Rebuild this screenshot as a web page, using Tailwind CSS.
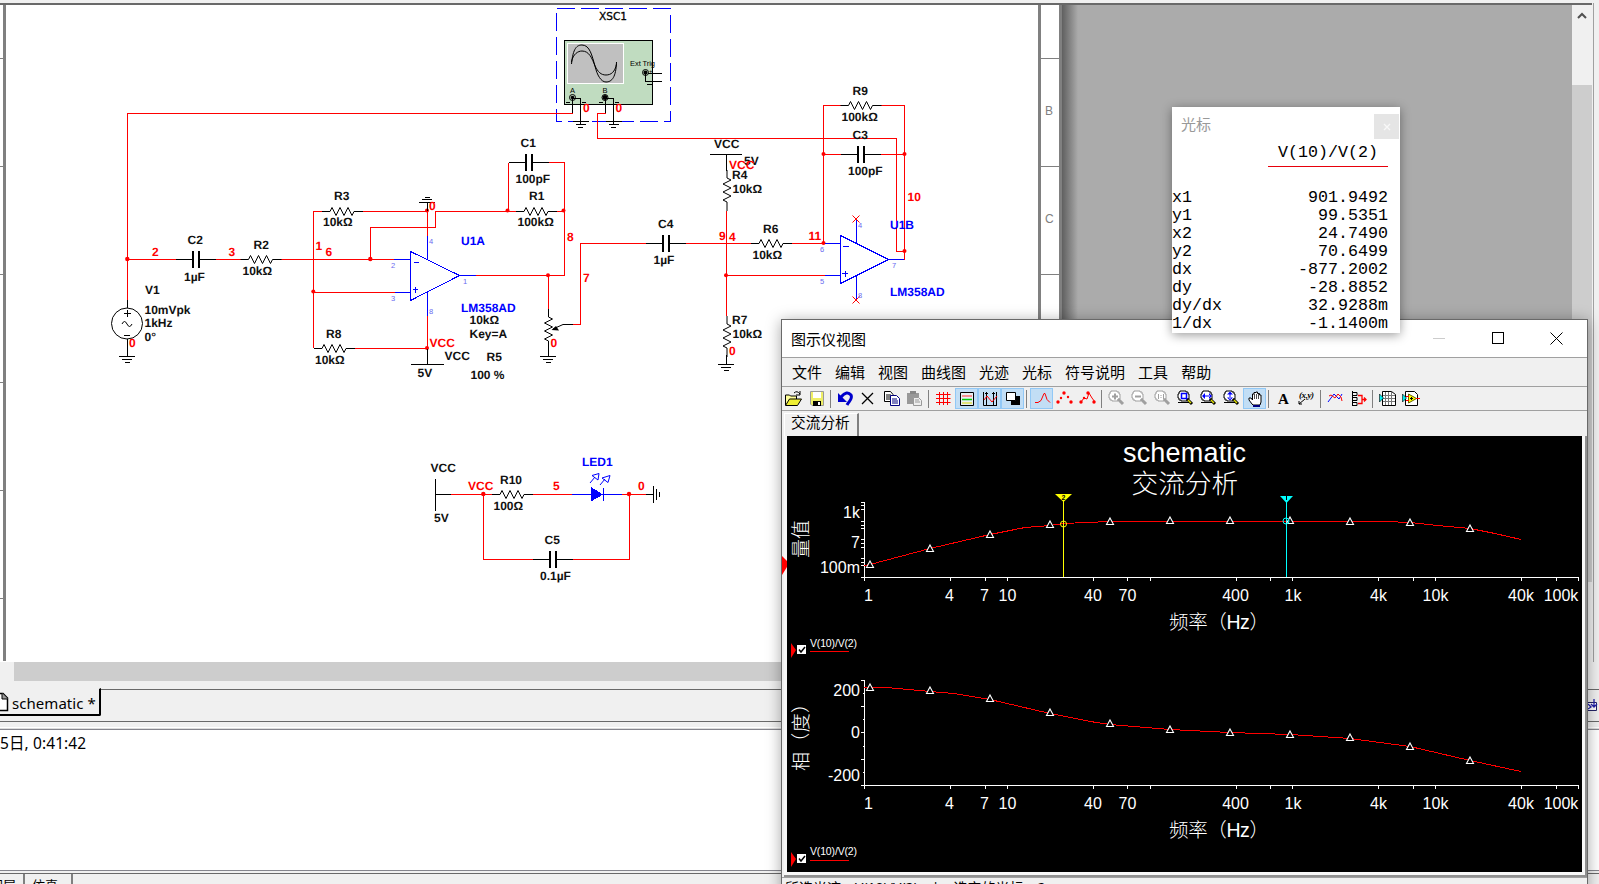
<!DOCTYPE html>
<html lang="zh-CN">
<head>
<meta charset="utf-8">
<title>schematic</title>
<script src="https://cdn.jsdelivr.net/npm/@tailwindcss/browser@4"></script>
</head>
<body class="relative h-[884px] w-[1599px] overflow-hidden bg-[#f0f0f0] font-['Noto_Sans','Noto_Sans_CJK_SC',sans-serif] text-black">

<!-- symbols -->
<svg class="absolute size-0" aria-hidden="true">
  <defs>
    <path id="res" d="M0 0h8l2-4 4 8 4-8 4 8 4-8 4 8 2-4h9" fill="none" stroke="#000"/>
    <g id="cap"><path d="M0 0h16M24 0h16" stroke="#000"/><path d="M17 -8.500v17M23 -8.500v17" stroke="#000" stroke-width="2"/></g>
    <path id="gnd" d="M-8 0h16M-5 3h10M-2.500 6h5" fill="none" stroke="#000"/>
    <path id="tri" d="M0 -3.500L3.500 3H-3.500Z" fill="#000" stroke="#fff" stroke-width="1.100"/>
    <g id="mag"><path d="M3 2h6v1h2v2h1v5h-2v2H4v-1H2V9H1V5h1V3h1z" fill="#fff" stroke="currentColor"/><path d="M10 10l5 5" stroke="currentColor" stroke-width="3"/></g>
  </defs>
</svg>

<div class="flex h-full flex-col">
  <!-- workspace -->
  <main class="flex h-[662px] border-t-[3px] border-[#f0f0f0]">
    <div class="h-[659px] w-[1062px] border-t-2 border-[#696969] bg-white">
      <svg class="block" width="1062" height="657" viewBox="0 5 1062 657" shape-rendering="crispEdges">
        <path d="M4.500 5V661M1039.500 5V661M1060.500 5V661" stroke="#808080" stroke-width="3"/>
        <path d="M0 58.500h3M0 166.500h3M0 274.500h3M0 382.500h3M0 490.500h3M0 598.500h3M1041 58.500h18M1041 166.500h18M1041 274.500h18" stroke="#808080"/>
        <g font-family="Liberation Sans" font-size="12" fill="#808080"><text x="1045" y="114.500">B</text><text x="1045" y="222.500">C</text></g>

        <!-- oscilloscope XSC1 -->
        <rect x="556.500" y="8.500" width="114" height="113" fill="none" stroke="#00f" stroke-dasharray="18 6"/>
        <rect x="564.500" y="40.500" width="88" height="64" fill="#c0dcc0" stroke="#000"/>
        <rect x="567.500" y="43.500" width="56" height="40" fill="#c0c0c0" stroke="#fff"/>
        <g fill="none" stroke="#000" shape-rendering="auto">
          <path d="M571.500 64C573 48 577 45 582 45C590 45 592 56 595 66C597 75 601 82 606 82C612 82 616 77 616.500 62M571.500 62C573 54 578 51 582 51C589 51 592 58 595 66C598 72 601 75 606 75C611 75 615 72 616.500 64"/>
          <circle cx="572.500" cy="97.500" r="3"/><circle cx="605" cy="97.500" r="3"/><circle cx="645.500" cy="72.500" r="3"/>
        </g>
        <g fill="#000" shape-rendering="auto"><circle cx="572.500" cy="97.500" r="1.800"/><circle cx="605" cy="97.500" r="2.400"/><circle cx="645.500" cy="72.500" r="2"/></g>
        <path d="M572.500 97v16M572.500 98.500h8V124M605.500 97v16M605.500 98.500h8V124M645.500 72.500V81.500H662M648 73.500H662M647 84.500h5M566 102h4M599 102h4M582 102.500h4M615 102.500h4" fill="none" stroke="#000"/>
        <use href="#gnd" x="580.500" y="121.500"/><use href="#gnd" x="613.500" y="121.500"/>
        <g font-family="Liberation Sans" font-size="7.500" fill="#000">
          <text x="630" y="66" textLength="25">Ext Trig</text><text x="570" y="93">A</text><text x="602.500" y="93">B</text><text x="649" y="73" font-size="6">+</text>
        </g>
        <text x="599" y="19.500" font-family="DejaVu Sans" font-size="11" fill="#000" stroke="#000" stroke-width=".3" textLength="28" lengthAdjust="spacingAndGlyphs">XSC1</text>

        <!-- red nets -->
        <g fill="none" stroke="#f00">
          <path d="M572.500 113.500H127.500V300M127.500 259.500H176M216 259.500H241M281 259.500H394M313.500 348V211.500H323M363 211.500H427.500V236M313.500 292.500H395M354 348.500H427.500V316"/>
          <path d="M370.500 259.500V227.500H435.500V211.500H516M508.500 211.500V162.500M548 162.500H564.500V275.500H476M556 211.500H564M548.500 275.500V309M573 324.500H580.500V243.500H646M686 243.500H751M792 243.500H825"/>
          <path d="M605.500 113.500H597.500V138.500H896.500V251.500H904.500M726.500 211V316M726.500 275.500H825M823.500 243V105.500H841M880 105.500H904.500V259.500M823.500 154.500H841M880 154.500H904"/>
          <path d="M451 494.500H492M532 494.500H572M622 494.500H646M483.500 494V559.500H533M572 559.500H629.500V494"/>
        </g>
        <g fill="#f00" shape-rendering="auto">
          <circle cx="127.300" cy="259" r="2.200"/><circle cx="370.300" cy="259" r="2.200"/><circle cx="313.300" cy="291.500" r="2"/><circle cx="427" cy="210.500" r="2"/><circle cx="507.500" cy="210.500" r="2"/><circle cx="563.500" cy="210.500" r="2"/><circle cx="548" cy="275.300" r="2"/><circle cx="427" cy="348" r="2"/><circle cx="726" cy="275.300" r="2"/><circle cx="823.500" cy="154" r="2"/><circle cx="904.500" cy="154" r="2"/><circle cx="823.500" cy="243" r="2"/><circle cx="904.500" cy="251" r="2"/><circle cx="483.300" cy="494" r="2.200"/><circle cx="629" cy="494" r="2.200"/>
        </g>
        <path d="M852.500 215.500l7 7M859.500 215.500l-7 7M852.500 296.500l7 7M859.500 296.500l-7 7" stroke="#f00" shape-rendering="auto"/>

        <!-- passive parts -->
        <use href="#cap" x="176" y="259.500"/><use href="#cap" x="508.500" y="162.500"/><use href="#cap" x="646" y="243.500"/><use href="#cap" x="841" y="154.500"/><use href="#cap" x="532.500" y="559.500"/>
        <g shape-rendering="auto">
          <use href="#res" x="240.500" y="259.500"/><use href="#res" x="322" y="211.500"/><use href="#res" x="314" y="348.500"/><use href="#res" x="516" y="211.500"/><use href="#res" x="751" y="243.500"/><use href="#res" x="840.500" y="105.500"/><use href="#res" x="492" y="494.500"/>
          <use href="#res" transform="translate(727 170) rotate(90)"/><use href="#res" transform="translate(727 316) rotate(90)"/><use href="#res" transform="translate(548.500 309) rotate(90)"/>
          <path d="M573 324.500H563L553 329" fill="none" stroke="#000"/><path d="M551.500 330l4.500-4 3 4.500z" fill="#000"/>
          <circle cx="127" cy="323.500" r="15.500" fill="none" stroke="#000"/>
          <path d="M122 324q2.500-5 5 0t5 0" fill="none" stroke="#000"/>
        </g>
        <path d="M127.500 300v8M127.500 339v17M124 313.500h7M127.500 310v7M124 335.500h6M548.500 349v7M726.500 154v17M710 154.500h32M726.500 355v9M427.500 202v9M427.500 349v15M411 364.500h33M435.500 479v32M435 494.500h16M646 494.500h7M653.500 486v17M656.500 489v11M659.500 492v5M419 202.500h16M422 199.500h10M425 197.500h5" fill="none" stroke="#000"/>
        <use href="#gnd" x="127" y="356.500"/><use href="#gnd" x="548" y="356.500"/><use href="#gnd" x="726" y="364.500"/>

        <!-- op-amps and LED -->
        <g fill="none" stroke="#00f">
          <path d="M410.500 251.500V300.500L459.500 275.500ZM394 259.500h16M395 292.500h15M459 275.500h17M427.500 236v23M427.500 292v24M414 262.500h5M413 289.500h5M415.500 287v6" />
          <path d="M840.500 235.500V283.500L888.500 259.500ZM825 243.500h16M825 275.500h16M888 259.500h16M856.500 220v23M856.500 276v23M843 246.500h6M842 273.500h6M845.500 271v6"/>
          <path d="M572 494.500h50M603.500 488v13"/>
          <path d="M590 483l5-6M592 475.500l7-2-1 6.500zM600 485l5-6M602 478l8-2.500-2 7z" shape-rendering="auto"/>
        </g>
        <path d="M591 487l12 7.500-12 7z" fill="#00f"/>

        <g font-family="Liberation Sans" font-size="12" font-weight="bold" text-rendering="geometricPrecision">
          <g fill="#111">
            <text x="334" y="200">R3</text><text x="323" y="226">10kΩ</text>
            <text x="187.500" y="244">C2</text><text x="184" y="280.500">1µF</text>
            <text x="253.500" y="249">R2</text><text x="242.500" y="274.500">10kΩ</text>
            <text x="145" y="293.500">V1</text><text x="144.500" y="313.500">10mVpk</text><text x="144.500" y="327">1kHz</text><text x="144.500" y="340.500">0°</text>
            <text x="326" y="337.500">R8</text><text x="315" y="364">10kΩ</text>
            <text x="520.500" y="147">C1</text><text x="515.500" y="183">100pF</text>
            <text x="529" y="200">R1</text><text x="517.500" y="226">100kΩ</text>
            <text x="658" y="228">C4</text><text x="653.500" y="264">1µF</text>
            <text x="469.500" y="324">10kΩ</text><text x="469.500" y="337.500">Key=A</text><text x="486.500" y="361">R5</text><text x="470.500" y="379">100 %</text>
            <text x="444.500" y="359.500">VCC</text><text x="417.500" y="376.500">5V</text>
            <text x="714" y="148">VCC</text><text x="744" y="165">5V</text>
            <text x="732" y="178.500">R4</text><text x="732.500" y="192.500">10kΩ</text>
            <text x="763" y="232.500">R6</text><text x="752.500" y="258.500">10kΩ</text>
            <text x="732" y="324">R7</text><text x="732.500" y="338">10kΩ</text>
            <text x="852.500" y="94.500">R9</text><text x="841.500" y="121">100kΩ</text>
            <text x="852.500" y="139">C3</text><text x="848" y="175">100pF</text>
            <text x="430.500" y="472">VCC</text><text x="434" y="522">5V</text>
            <text x="500" y="483.500">R10</text><text x="493.500" y="509.500">100Ω</text>
            <text x="544.500" y="543.500">C5</text><text x="540" y="579.500">0.1µF</text>
          </g>
          <g fill="#00f"><text x="461" y="245">U1A</text><text x="461" y="311.500">LM358AD</text><text x="890" y="229">U1B</text><text x="890" y="295.500">LM358AD</text><text x="582" y="466">LED1</text></g>
          <g fill="#f00">
            <text x="152" y="255.500">2</text><text x="228.500" y="255.500">3</text><text x="315.500" y="249.500">1</text><text x="325.500" y="255.500">6</text><text x="129" y="346.500">0</text>
            <text x="429" y="209.500">0</text><text x="567" y="241">8</text><text x="583" y="281.500">7</text><text x="550.500" y="346.500">0</text><text x="583" y="112">0</text><text x="615.500" y="112">0</text>
            <text x="429.500" y="346.500">VCC</text><text x="729" y="168.500">VCC</text><text x="719" y="240">9</text><text x="729" y="241">4</text><text x="808.500" y="239.500">11</text><text x="907.500" y="200.500">10</text><text x="729" y="354.500">0</text>
            <text x="468" y="490">VCC</text><text x="553" y="490">5</text><text x="638" y="490">0</text>
          </g>
        </g>
        <g font-family="Liberation Sans" font-size="7.500" fill="#6a6af0"><text x="391" y="268">2</text><text x="391" y="300.500">3</text><text x="429" y="244">4</text><text x="463" y="284">1</text><text x="429" y="313.500">8</text><text x="820" y="252">6</text><text x="820" y="284">5</text><text x="858" y="228">4</text><text x="892" y="268">7</text><text x="858" y="297.500">8</text></g>
      </svg>
    </div>
    <div class="h-[659px] w-[510px] border-t-2 border-[#696969] bg-[#ababab]">
      <div class="h-full w-4 bg-gradient-to-r from-[#606060] to-[#ababab]"></div>
    </div>
    <div class="flex h-[659px] w-5 flex-col border-t-2 border-[#696969] bg-[#f0f0f0]">
      <svg class="block" width="20" height="20" viewBox="0 0 20 20"><path d="M6 13l4-4 4 4" fill="none" stroke="#505050" stroke-width="2"/></svg>
      <div class="mt-[60px] h-[497px] bg-[#cdcdcd]"></div>
    </div>
    <div class="ml-px h-[659px] w-[6px] border-l border-[#a0a0a0] bg-[#f0f0f0]"></div>
  </main>
  <div class="flex h-5 bg-[#f0f0f0]"><div class="ml-[14px] h-[19px] w-[1558px] bg-[#cdcdcd]"></div></div>
  <!-- sheet tabs -->
  <div class="flex h-10 border-b border-[#696969]">
    <div class="mt-1.5 flex h-[28px] w-[101px] items-center rounded-br-[2px] border-t border-r-2 border-b-2 border-black border-t-transparent">
      <svg width="9" height="22" viewBox="0 0 9 22"><path d="M-6 2.500H3L7.500 7v12.500H-6" fill="#fff" stroke="#000" stroke-width="1.500"/><path d="M2 2v6h6" fill="#999" stroke="#000"/></svg>
      <span class="pt-[3px] pl-[3px] text-[15px] leading-none tracking-[0.05px] whitespace-nowrap">schematic *</span>
    </div>
    <div class="mt-[7px] flex flex-1 justify-end border-t border-[#696969] pt-2">
      <svg width="14" height="14" viewBox="0 0 14 14"><path d="M1.500 4.500h10v8h-10z" fill="#fff" stroke="#226"/><path d="M3 6l3 3-3 2M9 1v8M6 6l3 3 3-3" fill="none" stroke="#22a" stroke-width="1.300"/></svg>
    </div>
  </div>
  <div class="h-[7px] border-t-[5px] border-b border-t-[#f0f0f0] border-b-[#dcdcdc] bg-white"></div>
  <section class="h-[142px] border-y border-[#85858d] bg-white pt-px text-[15.500px] leading-6"><p class="tracking-[0.1px]">5日, 0:41:42</p></section>
  <div class="mt-0.5 flex flex-1 items-start overflow-hidden border-t border-[#696969] text-[13px] leading-[22px] whitespace-nowrap">
    <div class="flex h-3 w-[25px] justify-end border-r-2 border-[#808080] pr-[7px]"><span>电路图层</span></div>
    <div class="h-3 w-12 border-r-2 border-[#808080] pl-[7px]">仿真</div>
  </div>
</div>

<!-- grapher window -->
<section class="absolute top-[319px] left-[781px] flex h-[575px] w-[807px] flex-col border border-[#696969] bg-[#f0f0f0] shadow-[0_2px_14px_rgba(0,0,0,0.35)] [&>*]:shrink-0">
  <header class="flex h-[38px] items-center border-b border-[#a0a0a0] bg-white pl-[9px]">
    <h1 class="flex-1 pt-px text-[15px] leading-none">图示仪视图</h1>
    <div class="flex w-[154px] items-center justify-between pr-6">
      <svg width="13" height="13"><path d="M0 6.500h12" stroke="#ccc"/></svg>
      <svg width="13" height="13"><rect x=".5" y=".5" width="11" height="11" fill="none" stroke="#000"/></svg>
      <svg width="13" height="13"><path d="M.5 .5l12 12M12.500 .5l-12 12" stroke="#000"/></svg>
    </div>
  </header>
  <nav class="flex h-[29px] items-center gap-[13px] border-b border-[#a0a0a0] pl-[10px] text-[15px] leading-none whitespace-nowrap"><span>文件</span><span>编辑</span><span>视图</span><span>曲线图</span><span>光迹</span><span>光标</span><span>符号说明</span><span>工具</span><span>帮助</span></nav>
  <div class="flex h-6 items-center border-b border-[#a0a0a0] [&>i]:mx-[2px] [&>i]:h-[18px] [&>i]:w-[2px] [&>i]:border-l [&>i]:border-[#808080] [&>svg]:box-border [&>svg]:h-[21px] [&>svg]:w-[23px] [&>svg]:shrink-0">
    <svg viewBox="-3 -2 23 21" fill="none"><path d="M.5 15V5h4l1 1h6v3" stroke="#000" fill="#ff9"/><path d="M.5 15.500l4-6.500h12l-4 6.500z" fill="#ee3" stroke="#000"/><path d="M9 3q3-3 6 1M15 1v4h-4" stroke="#000"/></svg>
    <svg viewBox="-4 -2 23 21"><path d="M1.500 1.500h13v14H3l-1.500-1.500z" fill="#ee6" stroke="#999"/><path d="M4 2h8v6H4z" fill="#fff"/><path d="M4 11h8v5H4z" fill="#000"/><path d="M9 12h2v3H9z" fill="#fff"/></svg>
    <i></i>
    <svg viewBox="-3 -2 23 21"><path d="M4 7q6-7 10-2c2 4-2 6-4 10" fill="none" stroke="#00c" stroke-width="3"/><path d="M1 3v9h9z" fill="#00c"/></svg>
    <svg viewBox="-4 -2 23 21"><path d="M1 3l11 11M12 3L1 14" stroke="#000" stroke-width="1.300"/></svg>
    <svg viewBox="-3 -2 23 21"><g fill="#fff"><path d="M1.500 1.500h6l2.500 3v7H1.500z" stroke="#000"/><path d="M3 5h5M3 7h5M3 9h5" stroke="#000"/><path d="M7.500 5.500h6l3 3v7h-9z" stroke="#000080"/><path d="M9 9h5M9 11h6M9 13h6" stroke="#000080"/></g></svg>
    <svg viewBox="-3 -2 23 21"><path d="M1 3h12v11H1z" fill="#999"/><path d="M4 1h6v3H4z" fill="#888"/><path d="M7.500 7.500h5l3 3v5h-8z" fill="#eee" stroke="#999"/><path d="M9 10h4M9 12h5" stroke="#999"/></svg>
    <i></i>
    <svg viewBox="-4 -2 23 21"><path d="M3.500 2v13M7.500 2v13M11.500 2v13M0 4.500h14.500M0 8.500h14.500M0 12.500h14.500" stroke="#f00"/></svg>
    <svg class="border border-[#91c8f6] bg-[#c2def5]" viewBox="-4 -2 21 19"><path d="M.5 1.500h13v13H.5z" fill="#e8eef2" stroke="#000"/><path d="M2 5h10" stroke="#f33"/><path d="M2 8.500h10" stroke="#0c0" stroke-width="1.500"/><path d="M2 12h10" stroke="#dd0"/></svg>
    <svg class="border border-[#91c8f6] bg-[#c2def5]" viewBox="-4 -2 21 19"><path d="M.5 1v13.500H14M3.500 1v13M10.500 1v13M2 2.500h3M9 2.500h3M13.500 1v13" fill="none" stroke="#000"/><path d="M1 9l3-4 5 6 5-6" fill="none" stroke="#f00"/></svg>
    <svg class="border border-[#91c8f6] bg-[#c2def5]" viewBox="-4 -2 21 19"><path d="M5 5h9v9H5z"/><path d="M.5 1.500h9v8h-9z" fill="#fff" stroke="#000"/></svg>
    <i></i>
    <svg class="border border-[#91c8f6] bg-[#c2def5]" viewBox="-4 -2 21 19"><path d="M0 11.500h3l3-2 3-7h1l2 6 3 3" fill="none" stroke="#f00"/></svg>
    <svg viewBox="-4 -2 23 21" fill="#f00"><circle cx="1" cy="12" r="1.700"/><circle cx="4" cy="8" r="1.200"/><circle cx="7" cy="3" r="1.700"/><circle cx="11" cy="7" r="1.200"/><circle cx="14" cy="12" r="1.700"/></svg>
    <svg viewBox="-4 -2 23 21" fill="#f00"><path d="M1 12l3-4 3 1 2-6 3 5 3 4" fill="none" stroke="#f00"/><circle cx="1" cy="12" r="1.700"/><circle cx="8" cy="3" r="1.700"/><circle cx="4" cy="8" r="1.200"/><circle cx="14" cy="12" r="1.700"/></svg>
    <i></i>
    <svg class="text-[#a0a0a0]" viewBox="-3 -1 23 21"><use href="#mag"/><path d="M4 7.500h6M7 4.500v6" stroke="#a0a0a0" stroke-width="2"/></svg>
    <svg class="text-[#a0a0a0]" viewBox="-3 -1 23 21"><use href="#mag"/><path d="M4 7.500h6" stroke="#a0a0a0" stroke-width="2"/></svg>
    <svg class="text-[#a0a0a0]" viewBox="-3 -1 23 21"><use href="#mag"/><path d="M4.500 5v5M9.500 5v5M7 6v1M7 8v1" stroke="#a0a0a0"/></svg>
    <svg viewBox="-3 -1 23 21"><path d="M1 13h11v1H1z"/><use href="#mag"/><path d="M4.500 4.500h5v5h-5z" fill="#fff" stroke="#00f" stroke-width="1.500"/><path d="M11 11l3 3" stroke="#dd0" stroke-width="1.500"/></svg>
    <svg viewBox="-3 -1 23 21"><path d="M1 13h11v1H1z"/><use href="#mag"/><path d="M2 7l3-3v6zM12 7L9 4v6zM4 6.500h6v1H4z" fill="#00f"/><path d="M11 11l3 3" stroke="#dd0" stroke-width="1.500"/></svg>
    <svg viewBox="-3 -1 23 21"><path d="M1 13h11v1H1z"/><use href="#mag"/><path d="M7 2.500l3 3H4zM7 11.500l3-3H4zM6.500 4h1v6h-1z" fill="#00f"/><path d="M11 11l3 3" stroke="#dd0" stroke-width="1.500"/></svg>
    <svg class="border border-[#91c8f6] bg-[#c2def5]" viewBox="-4 -2 21 19"><path d="M4 13l-3-4V7h2l1.500 2V3h1.500V1.500h2V1h1.500v1.500h2V4h1.500v7l-1 3H5z" fill="#fff" stroke="#000"/><path d="M6.500 3v5M8.500 3v5M10.500 3v5" stroke="#000" stroke-width=".7"/><path d="M5 14h7v2H5z" fill="#000080"/></svg>
    <i></i>
    <svg viewBox="0 0 23 21"><text x="6" y="16" font-family="Liberation Serif" font-weight="bold" font-size="15">A</text></svg>
    <svg viewBox="0 0 23 21"><text x="4" y="10" font-family="Liberation Serif" font-style="italic" font-weight="bold" font-size="9" textLength="15">(x,y)</text><path d="M4 16l6-5M4 13v3h3" stroke="#000" fill="none"/></svg>
    <i></i>
    <svg viewBox="-4 -2 23 21" fill="none"><path d="M0 12l6-8 5 5 3-5" stroke="#00f"/><path d="M1 6l2-1 4 3 3-4 3 3 1 4" stroke="#f00"/></svg>
    <svg viewBox="-4 -2 23 21" fill="none"><path d="M1.500 1v15M1 2.500h5v3H1M1 7.500h5v3H1M1 12.500h5v3H1" stroke="#000"/><path d="M7 5.500h4v8H7M11 9.500h4M13 7.500l2 2-2 2" stroke="#f00" stroke-width="1.300"/></svg>
    <i></i>
    <svg viewBox="-3 -2 23 21"><path d="M3.500 1.500h9l4 3v11h-13z" fill="#fff" stroke="#000"/><path d="M6.500 2v13M9.500 2v13M12.500 2v13M4 5.500h12M4 8.500h12M4 11.500h12" stroke="#777"/><path d="M.5 4v8l4-4z" fill="#0ee" stroke="#000" stroke-width=".6"/></svg>
    <svg viewBox="-3 -2 23 21"><path d="M3.500 1.500h9l3 3v11h-12z" fill="#fff" stroke="#000"/><path d="M.5 4v8l4-4z" fill="#0ee" stroke="#000" stroke-width=".6"/><path d="M6.500 4v9l8-4.500z" fill="#ff0" stroke="#660"/><path d="M14 8.500h4M4 6.500h3M4 10.500h3" stroke="#f00"/><path d="M8 8.500h3M9.500 7v3" stroke="#000"/></svg>
  </div>
  <div class="h-[25px] pt-[2px] pl-[2px]">
    <div class="h-[23px] w-[75px] border-t border-l border-r-2 border-t-white border-l-white border-r-[#808080] pl-[6px] text-[14.700px] leading-[17px] whitespace-nowrap">交流分析</div>
  </div>
  <div class="ml-[2px] h-[439px] w-[801px] border-r-[3px] border-b-[3px] border-l-[3px] border-[#f8f8f8] bg-black shadow-[1px_1px_0_1px_#909090]">
    <svg class="block overflow-visible" width="795" height="436" viewBox="787 436 795 436">
      <path d="M782 556l5 5v6l-5 8z" fill="#f00"/>
      <g fill="#fff" font-family="Liberation Sans, 'Noto Sans CJK SC', sans-serif">
        <text x="1123" y="462" font-size="27" textLength="123">schematic</text>
        <text x="1131.500" y="493" font-size="26.700" font-weight="300">交流分析</text>
        <text transform="translate(808 558) rotate(-90)" font-size="19" font-weight="300">量值</text>
        <text transform="translate(808 771) rotate(-90)" font-size="19" font-weight="300" textLength="77">相（度）</text>
        <text x="1169" y="629" font-size="19.500" font-weight="300" textLength="100">频率（Hz）</text>
        <text x="1169" y="837" font-size="19.500" font-weight="300" textLength="100">频率（Hz）</text>
        <g font-size="16">
          <g text-anchor="end"><text x="860" y="518">1k</text><text x="860" y="547.500">7</text><text x="860" y="573">100m</text><text x="860" y="696">200</text><text x="860" y="738">0</text><text x="860" y="781">-200</text></g>
          <g text-anchor="middle"><text x="868.500" y="601">1</text><text x="949.500" y="601">4</text><text x="984.500" y="601">7</text><text x="1007.500" y="601">10</text><text x="1093" y="601">40</text><text x="1127.500" y="601">70</text><text x="1235.500" y="601">400</text><text x="1293" y="601">1k</text><text x="1378.500" y="601">4k</text><text x="1435.500" y="601">10k</text><text x="1521" y="601">40k</text><text x="1561" y="601">100k</text></g>
          <g text-anchor="middle"><text x="868.500" y="809">1</text><text x="949.500" y="809">4</text><text x="984.500" y="809">7</text><text x="1007.500" y="809">10</text><text x="1093" y="809">40</text><text x="1127.500" y="809">70</text><text x="1235.500" y="809">400</text><text x="1293" y="809">1k</text><text x="1378.500" y="809">4k</text><text x="1435.500" y="809">10k</text><text x="1521" y="809">40k</text><text x="1561" y="809">100k</text></g>
        </g>
        <g font-size="10.500"><text x="810" y="647" textLength="47">V(10)/V(2)</text><text x="810" y="855" textLength="47">V(10)/V(2)</text></g>
      </g>
      <g shape-rendering="crispEdges" fill="none">
        <g stroke="#fff">
          <path d="M861 502.500h3.500V577.500M861 577.500H1579M861 505.500h3M861 509.500h3M861 521.500h3M861 525.500h3M861 528.500h3M861 539.500h3M861 543.500h3M861 547.500h3M861 558.500h3M861 562.500h3M861 565.500h3"/>
          <path d="M861 680.500h3.500V785.500M861 785.500H1579M863 693.500h1M861 706.500h3M863 719.500h1M861 732.500h3M863 746.500h1M861 759.500h3M863 772.500h1"/>
          <path id="xt" d="M864.500 577v4M950.500 577v4M985.500 577v4M1007.500 577v4M1093.500 577v4M1127.500 577v4M1150.500 577v4M1236.500 577v4M1270.500 577v4M1292.500 577v4M1378.500 577v4M1413.500 577v4M1435.500 577v4M1521.500 577v4M1556.500 577v4M1578.500 577v4"/>
          <use href="#xt" y="208"/>
        </g>
        <path d="M864 565.500L870 564.500L930 548.500L990 534.500L1025 527.500L1050 525.500L1063 523.500L1110 521.500H1386L1410 522.500L1438 525.500L1470 528.500L1495 533.500L1521 539.500" stroke="#f00"/>
        <path d="M864 687.500H887L930 691.500L954 693.500L990 699.500L1050 713.500L1096 722.500L1110 724.500L1170 729.500L1230 732.500L1290 734.500L1350 738.500L1410 746.500L1470 760.500L1521 771.500" stroke="#f00"/>
        <path d="M810 651.500h39M810 860.500h39" stroke="#f00"/>
        <path d="M1063.500 500V577" stroke="#ff0"/><path d="M1286.500 500V577" stroke="#0ff"/>
      </g>
      <use href="#tri" x="870" y="564.500"/><use href="#tri" x="930" y="548.500"/><use href="#tri" x="990" y="534.500"/><use href="#tri" x="1050" y="524.500"/><use href="#tri" x="1110" y="521.500"/><use href="#tri" x="1170" y="520.500"/><use href="#tri" x="1230" y="520.500"/><use href="#tri" x="1290" y="520.500"/><use href="#tri" x="1350" y="521.500"/><use href="#tri" x="1410" y="522.500"/><use href="#tri" x="1470" y="528.500"/>
      <use href="#tri" x="870" y="687.500"/><use href="#tri" x="930" y="690.500"/><use href="#tri" x="990" y="698.500"/><use href="#tri" x="1050" y="712.500"/><use href="#tri" x="1110" y="723.500"/><use href="#tri" x="1170" y="729.500"/><use href="#tri" x="1230" y="732.500"/><use href="#tri" x="1290" y="734.500"/><use href="#tri" x="1350" y="737.500"/><use href="#tri" x="1410" y="746.500"/><use href="#tri" x="1470" y="760.500"/>
      <circle cx="1063.500" cy="524" r="3" fill="none" stroke="#ff0"/><circle cx="1286" cy="521" r="3" fill="none" stroke="#0ff"/>
      <path d="M1055 494h17l-8.500 8z" fill="#ff0"/><path d="M1280 496h13l-6.500 7z" fill="#0ff"/>
      <text x="1061.500" y="500" font-family="Liberation Sans" font-size="7" font-weight="bold">2</text><path d="M1286.500 496v4" stroke="#000"/>
      <g id="chk"><path d="M791 643l5 7-5 8z" fill="#f00"/><path d="M797 645h9v9h-9z" fill="#fff"/><path d="M799 649.500l2 2.500 4-5" fill="none" stroke="#000" stroke-width="1.500"/></g>
      <use href="#chk" y="209"/>
    </svg>
  </div>
  <footer class="mt-0.5 border-t border-[#a0a0a0] pl-[3px] text-[14px] leading-[20px] whitespace-pre"><span>所选光迹：V(10)/V(2)</span><span class="pl-[14px]">|</span><span class="pl-[14px]">选定的光标：2</span></footer>
</section>

<!-- cursor readout -->
<aside class="absolute top-[107px] left-[1172px] flex h-[226px] w-[228px] flex-col bg-white shadow-[0_2px_10px_rgba(0,0,0,0.4)]">
  <header class="flex h-[33px] items-end justify-between pr-px pl-[9px]"><span class="pb-[3px] text-[15px] leading-6 text-[#999]">光标</span><span class="flex size-[25px] items-center justify-center bg-[#e5e5e5]"><svg width="8" height="8"><path d="M1 1l6 6M7 1L1 7" stroke="#f8f8f8" stroke-width="1.300"/></svg></span></header>
  <div class="mt-[3px] ml-24 h-[25px] w-[120px] border-b border-red-600 text-center font-['Liberation_Mono'] text-[16.670px] leading-[22px]">V(10)/V(2)</div>
  <dl class="mt-[22px] grid grid-cols-[auto_1fr] pr-[12px] font-['Liberation_Mono'] text-[16.670px] leading-[18px] [&>dd]:text-right">
    <dt>x1</dt><dd>901.9492</dd><dt>y1</dt><dd>99.5351</dd><dt>x2</dt><dd>24.7490</dd><dt>y2</dt><dd>70.6499</dd><dt>dx</dt><dd>-877.2002</dd><dt>dy</dt><dd>-28.8852</dd><dt>dy/dx</dt><dd>32.9288m</dd><dt>1/dx</dt><dd>-1.1400m</dd>
  </dl>
</aside>
</body>
</html>
